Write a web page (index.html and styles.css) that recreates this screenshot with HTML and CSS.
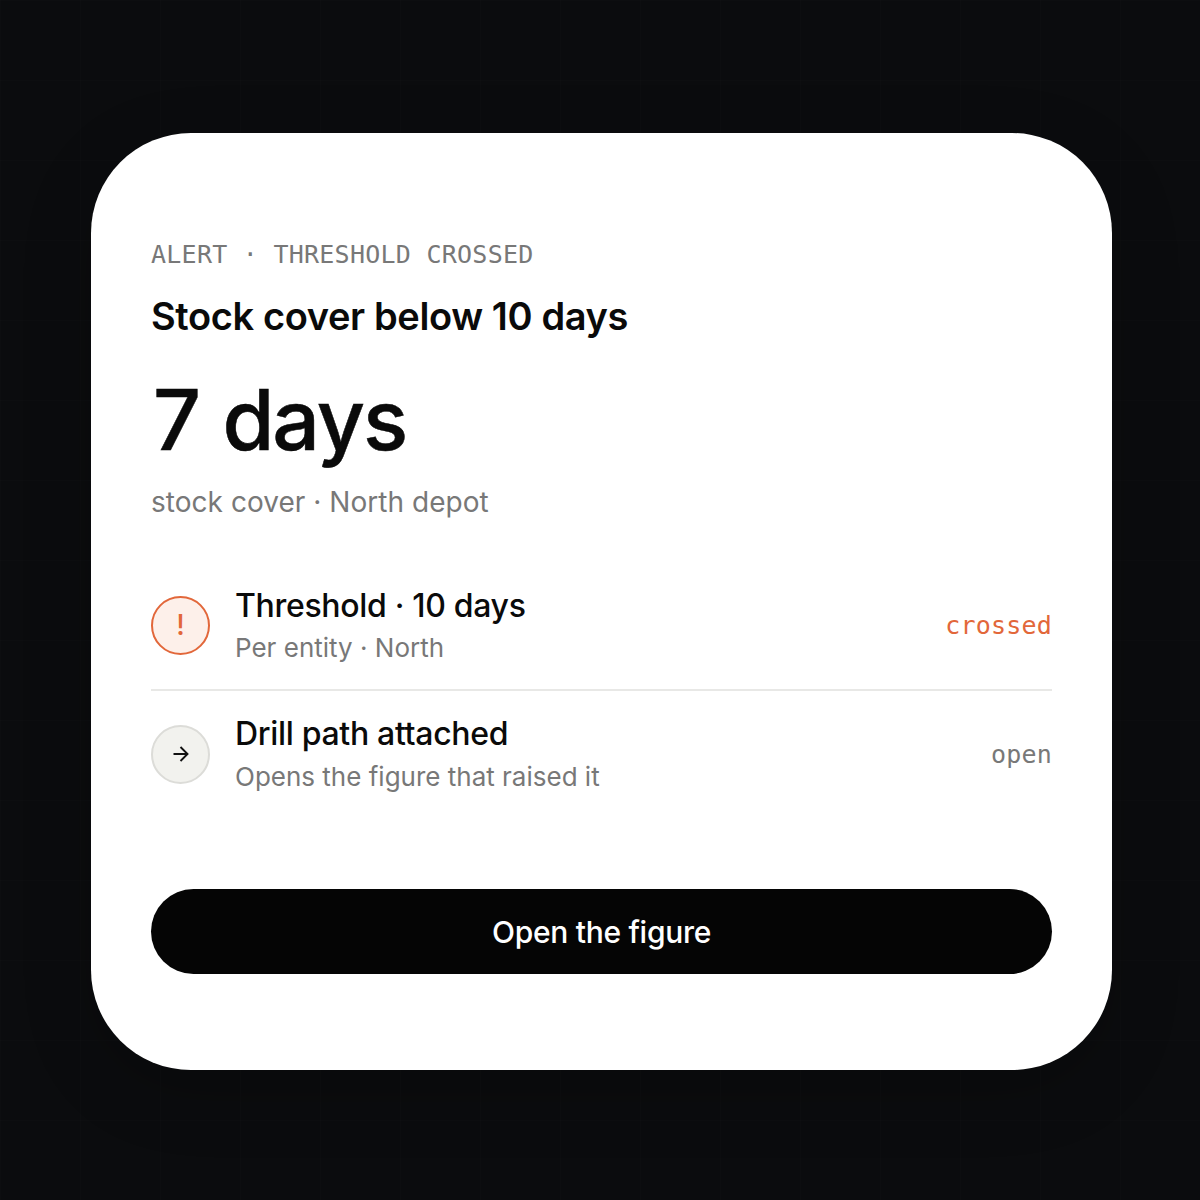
FILE: index.html
```html
<!DOCTYPE html>
<html lang="en">
<head>
<meta charset="utf-8">
<title>Alert</title>
<link rel="stylesheet" href="styles.css">
</head>
<body>
<main class="card">
  <div class="eyebrow">ALERT · THRESHOLD CROSSED</div>
  <h1 class="title">Stock cover below 10 days</h1>
  <div class="hero">7 days</div>
  <div class="sub">stock cover · North depot</div>
  <div class="rows">
    <div class="row row-first">
      <div class="badge badge-alert">!</div>
      <div class="row-text">
        <div class="row-title">Threshold · 10 days</div>
        <div class="row-sub">Per entity · North</div>
      </div>
      <div class="tag tag-alert">crossed</div>
    </div>
    <div class="row row-second">
      <div class="badge badge-plain">
        <svg class="arrow" viewBox="0 0 16 16" width="16" height="16" aria-hidden="true"><path d="M0.5 8H14.5M7.5 1L14.5 8L7.5 15" fill="none" stroke="#111" stroke-width="1.9"/></svg>
      </div>
      <div class="row-text">
        <div class="row-title">Drill path attached</div>
        <div class="row-sub">Opens the figure that raised it</div>
      </div>
      <div class="tag">open</div>
    </div>
  </div>
  <button class="cta" type="button">Open the figure</button>
</main>
</body>
</html>
```
FILE: styles.css
```css
* { box-sizing: border-box; }
html, body { margin: 0; height: 100%; }
body {
  width: 1200px;
  height: 1200px;
  padding: 3px 0 0 3px;
  display: flex;
  align-items: center;
  justify-content: center;
  background-color: #0b0c0e;
  background-image:
    linear-gradient(rgba(255,255,255,0.008) 1px, transparent 1px),
    linear-gradient(90deg, rgba(255,255,255,0.008) 1px, transparent 1px);
  background-size: 80px 80px;
  font-family: Inter, "Liberation Sans", sans-serif;
  color: #0a0a0a;
}
.card {
  width: 1021px;
  height: 937px;
  padding: 106px 60px 0;
  background: #fff;
  border-radius: 100px;
  box-shadow: 0 20px 70px rgba(0,0,0,0.2);
  display: flex;
  flex-direction: column;
}
.eyebrow {
  font-family: "DejaVu Sans Mono", monospace;
  font-size: 25px;
  line-height: 32px;
  letter-spacing: 0.25px;
  color: #787878;
  white-space: pre;
}
.title {
  margin: 23px 0 0;
  font-size: 38px;
  line-height: 44px;
  font-weight: 600;
  letter-spacing: -0.38px;
}
.hero {
  margin: 36px 0 0 2px;
  font-size: 84px;
  line-height: 92px;
  font-weight: 500;
  letter-spacing: -2px;
  word-spacing: 3px;
  -webkit-text-stroke: 0.5px #0a0a0a;
}
.sub {
  margin-top: 18px;
  font-size: 28px;
  line-height: 36px;
  letter-spacing: 0.04px;
  color: #787878;
}
.rows { margin-top: 43px; }
.row {
  display: flex;
  align-items: center;
  gap: 25px;
  height: 128px;
  padding-bottom: 2px;
}
.row-first { border-bottom: 2px solid #e8e8e6; }
.badge {
  flex: none;
  width: 59px;
  height: 59px;
  border-radius: 50%;
  display: flex;
  align-items: center;
  justify-content: center;
}
.badge-alert {
  border: 2px solid #e2673a;
  background: #fdf0ea;
  color: #e2673a;
  font-size: 28px;
  font-weight: 500;
}
.badge-plain {
  border: 2px solid #dcdcd8;
  background: #f2f2ee;
}
.row-text { flex: 1; }
.row-title {
  font-size: 32px;
  line-height: 40px;
  font-weight: 500;
  letter-spacing: -0.32px;
}
.row-sub {
  margin-top: 5px;
  font-size: 26px;
  line-height: 34px;
  color: #787878;
}
.row-second .row-sub { margin-top: 6px; }
.tag {
  margin-top: 2px;
  font-family: "DejaVu Sans Mono", monospace;
  font-size: 25px;
  line-height: 32px;
  letter-spacing: 0.2px;
  color: #787878;
}
.tag-alert { color: #e2673a; }
.cta {
  margin-top: 70px;
  height: 85px;
  border: 0;
  border-radius: 43px;
  background: #050505;
  color: #fff;
  font: 500 30px/1 Inter, "Liberation Sans", sans-serif;
  letter-spacing: -0.3px;
}
```
